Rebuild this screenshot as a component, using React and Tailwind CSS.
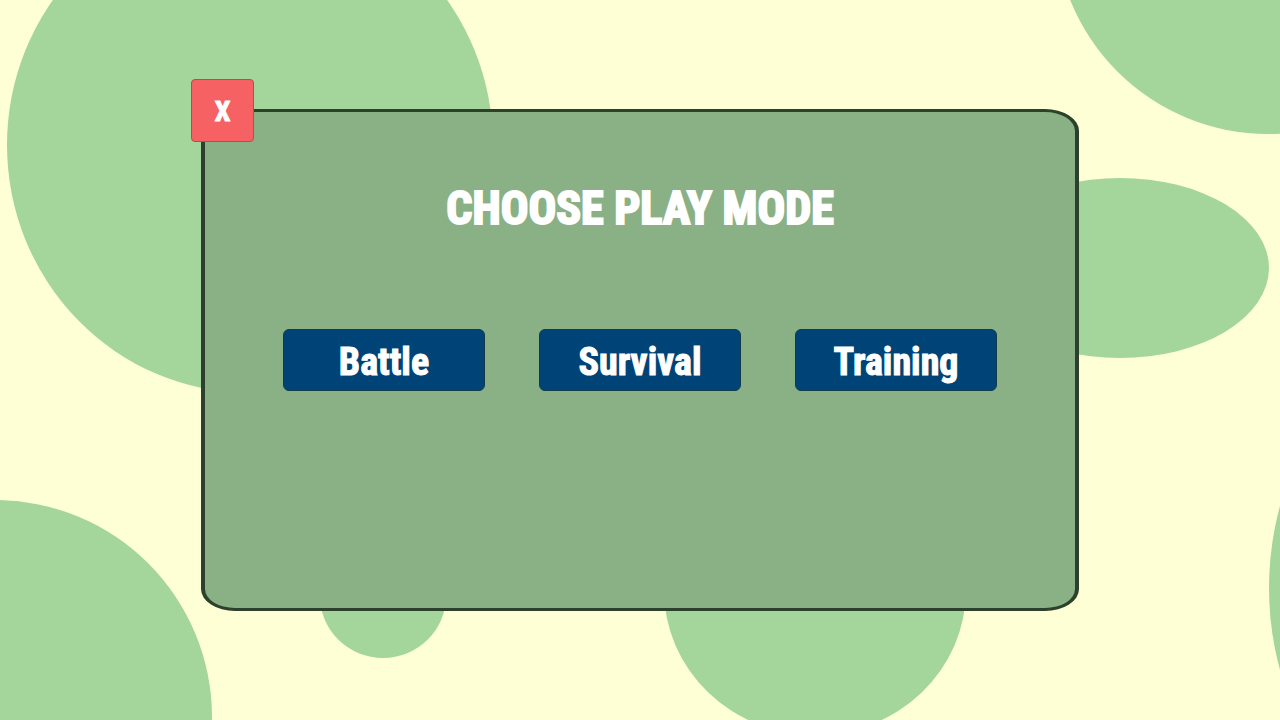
const blobs = [
  { cx: 250, cy: 145, rx: 243, ry: 248 },
  { cx: 1268, cy: -79, rx: 213, ry: 213 },
  { cx: 1120, cy: 268, rx: 149, ry: 90 },
  { cx: -5, cy: 717, rx: 217, ry: 217 },
  { cx: 383, cy: 596, rx: 63, ry: 62 },
  { cx: 815, cy: 590, rx: 151, ry: 145 },
  { cx: 1580, cy: 588, rx: 311, ry: 311 },
];

const modes = ["Battle", "Survival", "Training"];

function Backdrop() {
  return (
    <svg
      className="absolute inset-0 h-full w-full"
      viewBox="0 0 1280 720"
      preserveAspectRatio="xMidYMid slice"
      fill="#a4d69b"
      aria-hidden="true"
    >
      {blobs.map((b, i) => (
        <ellipse key={i} {...b} />
      ))}
    </svg>
  );
}

function ModeButton({ children }) {
  return (
    <button
      type="button"
      className="flex h-[62px] items-center justify-center rounded-md border border-[#123c4c] bg-[#004477] pt-1 text-[38px] leading-none"
    >
      {children}
    </button>
  );
}

export default function App() {
  return (
    <div className="relative flex min-h-screen items-center justify-center overflow-hidden bg-[#feffd4] px-6 py-16 font-['Roboto_Condensed','Open_Sans_Condensed','Lato',sans-serif] font-bold text-white [-webkit-text-stroke:1px_white] [stroke-linejoin:round]">
      <Backdrop />
      <main className="relative min-h-[502px] w-full max-w-[878px] rounded-[34px/22px] border-x-4 border-y-3 border-[#2c412b] bg-[#8ab185] px-[78px] pt-[60px] pb-16">
        <button
          type="button"
          aria-label="Close"
          className="absolute -top-[33px] -left-[14px] flex size-[63px] items-center justify-center rounded-sm border border-[#a8544c] bg-[#f66163] pt-0.5 text-[28px] leading-none"
        >
          X
        </button>
        <h1 className="text-center text-[46px] leading-[72px] [-webkit-text-stroke:2px_white]">
          CHOOSE PLAY MODE
        </h1>
        <div className="mt-[85px] grid grid-cols-1 gap-[54px] sm:grid-cols-3">
          {modes.map((mode) => (
            <ModeButton key={mode}>{mode}</ModeButton>
          ))}
        </div>
      </main>
    </div>
  );
}
